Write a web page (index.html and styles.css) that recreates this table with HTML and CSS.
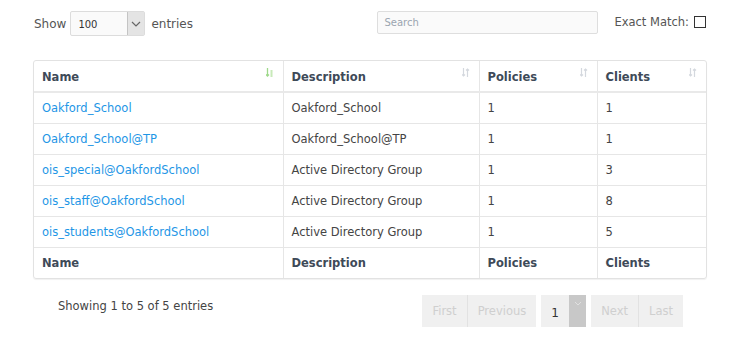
FILE: index.html
```html
<!DOCTYPE html>
<html>
<head>
<meta charset="utf-8">
<link rel="stylesheet" href="styles.css">
</head>
<body>
<div class="page">
  <div class="toolbar">
    <div class="length">
      <span>Show</span>
      <div class="select">
        <span class="select-value">100</span>
        <span class="select-arrow"><svg width="10" height="6" viewBox="0 0 10 6"><path d="M1 1 L5 5 L9 1" fill="none" stroke="#666" stroke-width="1.2"/></svg></span>
      </div>
      <span class="entries">entries</span>
    </div>
    <div class="search">Search</div>
    <div class="exact">
      <span>Exact Match:</span>
      <span class="checkbox"></span>
    </div>
  </div>

  <div class="table-wrap">
    <table class="grid">
      <colgroup>
        <col class="c1"><col class="c2"><col class="c3"><col class="c4">
      </colgroup>
      <thead>
        <tr>
          <th>Name<span class="sort active"><svg width="8" height="9" viewBox="0 0 8 9"><path d="M1.5 0 V8 M0 6.5 L1.5 8 L3 6.5" fill="none" stroke="#9ed98a" stroke-width="1.3"/><path d="M5.5 2 V9" stroke="#c8eab9" stroke-width="2"/></svg></span></th>
          <th>Description<span class="sort"><svg width="8" height="9" viewBox="0 0 8 9"><path d="M1.5 0 V8 M0 6.5 L1.5 8 L3 6.5" fill="none" stroke="#d4d8de" stroke-width="1.2"/><path d="M5.5 9 V1 M4 2.5 L5.5 1 L7 2.5" fill="none" stroke="#d4d8de" stroke-width="1.2"/></svg></span></th>
          <th>Policies<span class="sort"><svg width="8" height="9" viewBox="0 0 8 9"><path d="M1.5 0 V8 M0 6.5 L1.5 8 L3 6.5" fill="none" stroke="#d4d8de" stroke-width="1.2"/><path d="M5.5 9 V1 M4 2.5 L5.5 1 L7 2.5" fill="none" stroke="#d4d8de" stroke-width="1.2"/></svg></span></th>
          <th>Clients<span class="sort"><svg width="8" height="9" viewBox="0 0 8 9"><path d="M1.5 0 V8 M0 6.5 L1.5 8 L3 6.5" fill="none" stroke="#d4d8de" stroke-width="1.2"/><path d="M5.5 9 V1 M4 2.5 L5.5 1 L7 2.5" fill="none" stroke="#d4d8de" stroke-width="1.2"/></svg></span></th>
        </tr>
      </thead>
      <tbody>
        <tr><td><a class="link">Oakford_School</a></td><td>Oakford_School</td><td>1</td><td>1</td></tr>
        <tr><td><a class="link">Oakford_School@TP</a></td><td>Oakford_School@TP</td><td>1</td><td>1</td></tr>
        <tr><td><a class="link">ois_special@OakfordSchool</a></td><td>Active Directory Group</td><td>1</td><td>3</td></tr>
        <tr><td><a class="link">ois_staff@OakfordSchool</a></td><td>Active Directory Group</td><td>1</td><td>8</td></tr>
        <tr><td><a class="link">ois_students@OakfordSchool</a></td><td>Active Directory Group</td><td>1</td><td>5</td></tr>
      </tbody>
      <tfoot>
        <tr><th>Name</th><th>Description</th><th>Policies</th><th>Clients</th></tr>
      </tfoot>
    </table>
  </div>

  <div class="footer">
    <div class="info">Showing 1 to 5 of 5 entries</div>
    <div class="pager">
      <div class="btn-group">
        <span class="pbtn">First</span><span class="pbtn">Previous</span>
      </div>
      <div class="page-select">
        <span class="page-num">1</span>
        <span class="page-arrow"><svg width="8" height="5" viewBox="0 0 8 5"><path d="M1 1 L4 4 L7 1" fill="none" stroke="#e0e0e0" stroke-width="1"/></svg></span>
      </div>
      <div class="btn-group">
        <span class="pbtn">Next</span><span class="pbtn">Last</span>
      </div>
    </div>
  </div>
</div>
</body>
</html>
```

FILE: styles.css
```css
* { box-sizing: border-box; }
html, body { margin: 0; background: #fff; }
body {
  font-family: "DejaVu Sans", Verdana, sans-serif;
  font-size: 11px;
  color: #444;
}
.page {
  width: 737px;
  padding: 11px 30px 0 33px;
}
.toolbar {
  display: flex;
  align-items: center;
  width: 674px;
  height: 25px;
}
.length {
  display: flex;
  align-items: center;
  gap: 4px;
  padding-left: 1px;
  font-size: 12px;
  color: #555;
}
.entries { margin-left: 2px; }
.select {
  display: flex;
  width: 75px;
  height: 25px;
  border: 1px solid #dcdcdc;
  background: #fafafa;
  border-radius: 2px;
}
.select-value {
  flex: 1;
  font-size: 10px;
  color: #333;
  padding: 7px 0 0 7px;
}
.select-arrow {
  width: 17px;
  background: #e4e4e4;
  border-left: 1px solid #c4c4c4;
  display: flex;
  align-items: center;
  justify-content: center;
}
.search {
  margin-left: auto;
  margin-right: 16px;
  width: 221px;
  height: 23px;
  border: 1px solid #dedede;
  border-radius: 2px;
  background: #fafafa;
  color: #9aa5b0;
  font-size: 10px;
  padding: 5px 0 0 6px;
  align-self: flex-start;
}
.exact {
  display: flex;
  align-items: center;
  gap: 5px;
  font-size: 11.5px;
  color: #555;
  white-space: nowrap;
  padding-bottom: 3px;
  margin-right: 1px;
}
.checkbox {
  width: 12px;
  height: 12px;
  border: 1px solid #333;
  background: #fff;
}
.table-wrap {
  margin-top: 24px;
  width: 674px;
  border: 1px solid #e2e2e2;
  border-radius: 3px;
  box-shadow: 0 1px 1px rgba(0,0,0,0.06);
  overflow: hidden;
}
.grid {
  width: 100%;
  border-collapse: collapse;
  table-layout: fixed;
}
.c1 { width: 249px; }
.c2 { width: 196px; }
.c3 { width: 118px; }
.c4 { width: 109px; }
.grid th, .grid td {
  text-align: left;
  padding: 0 8px;
  border-left: 1px solid #e6e6e6;
  border-top: 1px solid #e6e6e6;
}
.grid tr > :first-child { border-left: none; }
.grid thead th {
  border-top: none;
  height: 31px;
  position: relative;
  border-bottom: 2px solid #e9e9e9;
}
.grid th {
  font-weight: bold;
  font-size: 11.5px;
  color: #3e4a58;
  height: 31px;
}
.grid thead th { padding-top: 2px; }
.grid td {
  height: 31px;
  font-size: 11.5px;
  color: #444;
}
.grid tbody tr:first-child td { border-top: none; }
.link { color: #1e96e6; }
.sort {
  position: absolute;
  right: 9px;
  top: 7px;
  line-height: 0;
}
.footer {
  display: flex;
  align-items: center;
  width: 674px;
  margin-top: 16px;
}
.info {
  padding-left: 25px;
  font-size: 11.5px;
  color: #444;
  flex: 1;
  padding-bottom: 11px;
}
.pager {
  display: flex;
  gap: 5px;
  margin-right: 24px;
  height: 32px;
}
.btn-group { display: flex; background: #f0f0f0; }
.pbtn {
  display: flex;
  align-items: center;
  padding: 0 10px;
  color: #cfcfcf;
  font-size: 11.5px;
  border-left: 1px solid #e2e2e2;
}
.pbtn:first-child { border-left: none; }
.page-select {
  display: flex;
  background: #f0f0f0;
  width: 45px;
}
.page-num {
  flex: 1;
  display: flex;
  align-items: center;
  padding: 4px 0 0 10px;
  color: #333;
  font-size: 12px;
}
.page-arrow {
  width: 17px;
  background: #c8c8c8;
  display: flex;
  justify-content: center;
  padding-top: 6px;
}
```
